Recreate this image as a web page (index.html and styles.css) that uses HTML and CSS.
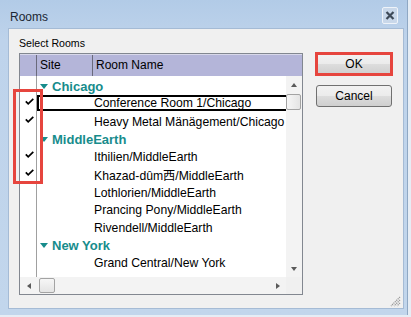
FILE: index.html
```html
<!DOCTYPE html>
<html lang="en">
<head>
    <meta charset="UTF-8">
    <title>Rooms</title>
    <link rel="stylesheet" href="styles.css">
</head>
<body>
    <div class="window">
        <div class="titlebar">
            <span class="title">Rooms</span>
            <div class="close-btn">
                <svg width="14" height="15" viewBox="0 0 14 15">
                    <path d="M3.5 4 L10.5 11 M10.5 4 L3.5 11" stroke="#3e4a58" stroke-width="2.2" fill="none"/>
                </svg>
            </div>
        </div>
        <div class="client">
            <div class="select-panel">
                <div class="group-label">Select Rooms</div>
                <div class="list">
                    <div class="list-header">
                        <div class="col-check"></div>
                        <div class="col-site">Site</div>
                        <div class="col-room">Room Name</div>
                    </div>
                    <div class="list-main">
                        <div class="rows">
                            <div class="row group">
                                <span class="check-cell"></span>
                                <span class="cell"><span class="arrow"></span>Chicago</span>
                            </div>
                            <div class="row focused">
                                <span class="check-cell"><svg class="check" width="9" height="7" viewBox="0 0 9 7"><path d="M0.8 3.3 L3.2 5.8 L8.3 0.8" fill="none" stroke="#000" stroke-width="1.7"/></svg></span>
                                <span class="cell">Conference Room 1/Chicago</span>
                            </div>
                            <div class="row">
                                <span class="check-cell"><svg class="check" width="9" height="7" viewBox="0 0 9 7"><path d="M0.8 3.3 L3.2 5.8 L8.3 0.8" fill="none" stroke="#000" stroke-width="1.7"/></svg></span>
                                <span class="cell">Heavy Metal Mänägement/Chicago</span>
                            </div>
                            <div class="row group">
                                <span class="check-cell"></span>
                                <span class="cell"><span class="arrow"></span>MiddleEarth</span>
                            </div>
                            <div class="row">
                                <span class="check-cell"><svg class="check" width="9" height="7" viewBox="0 0 9 7"><path d="M0.8 3.3 L3.2 5.8 L8.3 0.8" fill="none" stroke="#000" stroke-width="1.7"/></svg></span>
                                <span class="cell">Ithilien/MiddleEarth</span>
                            </div>
                            <div class="row">
                                <span class="check-cell"><svg class="check" width="9" height="7" viewBox="0 0 9 7"><path d="M0.8 3.3 L3.2 5.8 L8.3 0.8" fill="none" stroke="#000" stroke-width="1.7"/></svg></span>
                                <span class="cell">Khazad-dûm西/MiddleEarth</span>
                            </div>
                            <div class="row">
                                <span class="check-cell"></span>
                                <span class="cell">Lothlorien/MiddleEarth</span>
                            </div>
                            <div class="row">
                                <span class="check-cell"></span>
                                <span class="cell">Prancing Pony/MiddleEarth</span>
                            </div>
                            <div class="row">
                                <span class="check-cell"></span>
                                <span class="cell">Rivendell/MiddleEarth</span>
                            </div>
                            <div class="row group">
                                <span class="check-cell"></span>
                                <span class="cell"><span class="arrow"></span>New York</span>
                            </div>
                            <div class="row">
                                <span class="check-cell"></span>
                                <span class="cell">Grand Central/New York</span>
                            </div>
                        </div>
                        <div class="vscroll">
                            <div class="sb-btn"><span class="tri-up"></span></div>
                            <div class="thumb-v"></div>
                            <div class="sb-space"></div>
                            <div class="sb-btn"><span class="tri-down"></span></div>
                        </div>
                    </div>
                    <div class="hscroll-row">
                        <div class="hscroll">
                            <div class="sb-btn-h"><span class="tri-left"></span></div>
                            <div class="thumb-h"></div>
                            <div class="sb-space"></div>
                            <div class="sb-btn-h"><span class="tri-right"></span></div>
                        </div>
                        <div class="corner"></div>
                    </div>
                </div>
                <!-- marca roja sobre las casillas -->
                <div class="mark mark-checks"></div>
            </div>
            <div class="buttons">
                <div class="btn-wrap">
                    <button class="btn">OK</button>
                    <div class="mark mark-ok"></div>
                </div>
                <button class="btn">Cancel</button>
            </div>
            <svg class="grip" width="12" height="12" viewBox="0 0 12 12">
                <path d="M11 2 L2 11 M11 5 L5 11 M11 8 L8 11" stroke="#9a9a9a" stroke-width="1.3" stroke-dasharray="1.2 0.8"/>
            </svg>
        </div>
    </div>
</body>
</html>
```

FILE: styles.css
```css
body {
    margin: 0;
    background: #e6edf5;
    font-family: 'Liberation Sans', Arial, 'Noto Sans CJK SC', sans-serif;
}
.window {
    width: 408px;
    height: 315px;
    box-sizing: border-box;
    background: linear-gradient(#b2cbe7, #bed3eb 40px, #c2d6ec);
    border-right: 1px solid #8fa8c4;
    display: flex;
    flex-direction: column;
    padding: 0 3px 6px 8px;
}
.titlebar {
    height: 28px;
    flex: none;
    display: flex;
    align-items: flex-start;
    justify-content: space-between;
    padding: 0 6px 0 2px;
}
.title {
    font-size: 12px;
    line-height: 14px;
    margin-top: 10px;
    color: #1b2633;
}
.close-btn {
    width: 16px;
    height: 17px;
    box-sizing: border-box;
    margin-top: 7px;
    border: 1px solid #eef3f9;
    border-radius: 2px;
    background: #c9d8ea;
    display: flex;
}
.client {
    flex: 1;
    background: #f0f0f0;
    border: 1px solid #a5bbd5;
    display: flex;
    align-items: flex-start;
    padding: 8px 0 0 10px;
    position: relative;
}
.select-panel {
    width: 284px;
    position: relative;
    display: flex;
    flex-direction: column;
}
.group-label {
    font-size: 10.6px;
    line-height: 13px;
    height: 13px;
    margin-bottom: 3px;
    color: #000;
}
.list {
    height: 242px;
    box-sizing: border-box;
    border: 1px solid #828790;
    background: #fff;
    display: flex;
    flex-direction: column;
}
.list-header {
    height: 22px;
    flex: none;
    display: flex;
    background: #b4b5d9;
    border-top: 1px solid #d8d8ea;
    box-sizing: border-box;
    font-size: 12px;
    line-height: 20px;
    color: #000;
}
.col-check {
    width: 17px;
    box-sizing: border-box;
    border-right: 1px solid #6a6a7c;
}
.col-site {
    width: 56px;
    box-sizing: border-box;
    border-right: 1px solid #6a6a7c;
    padding-left: 3px;
}
.col-room {
    flex: 1;
    padding-left: 3px;
}
.list-main {
    height: 201px;
    flex: none;
    display: flex;
}
.rows {
    flex: 1;
    padding-top: 2px;
    overflow: hidden;
    background: linear-gradient(to right, #fff 16px, #a0a0a0 16px, #a0a0a0 17px, #fff 17px);
}
.row {
    height: 17.65px;
    display: flex;
    align-items: center;
    font-size: 12.2px;
    color: #000;
}
.check-cell {
    width: 17px;
    flex: none;
    align-self: stretch;
    box-sizing: border-box;
    padding: 2.5px 0 0 5px;
}
.check {
    display: block;
}
.cell {
    flex: 1;
    display: flex;
    align-items: center;
    padding-left: 57px;
    white-space: nowrap;
}
.group .cell {
    padding-left: 2.5px;
    color: #178c8c;
    font-weight: bold;
    font-size: 13px;
}
.arrow {
    width: 0;
    height: 0;
    border-left: 4.5px solid transparent;
    border-right: 4.5px solid transparent;
    border-top: 5px solid #178c8c;
    margin-right: 4.5px;
}
.focused .cell {
    align-self: flex-start;
    height: 16px;
    margin-top: -1px;
    box-sizing: border-box;
    border: 2px solid #000;
    border-right: none;
    padding-left: 55px;
}
/* barras de desplazamiento */
.vscroll {
    width: 16px;
    flex: none;
    background: #f3f3f3;
    display: flex;
    flex-direction: column;
}
.sb-btn {
    height: 17px;
    display: flex;
    align-items: center;
    justify-content: center;
}
.sb-space {
    flex: 1;
}
.thumb-v {
    height: 16px;
    width: 15px;
    margin-top: 1px;
    box-sizing: border-box;
    border: 1px solid #a3a3a3;
    border-radius: 2px;
    background: linear-gradient(to right, #f6f6f6, #e4e4e4);
}
.tri-up, .tri-down, .tri-left, .tri-right {
    width: 0;
    height: 0;
}
.tri-up {
    border-left: 3.5px solid transparent;
    border-right: 3.5px solid transparent;
    border-bottom: 4px solid #5a5a5a;
}
.tri-down {
    border-left: 3.5px solid transparent;
    border-right: 3.5px solid transparent;
    border-top: 4px solid #5a5a5a;
}
.tri-left {
    border-top: 3.5px solid transparent;
    border-bottom: 3.5px solid transparent;
    border-right: 4px solid #5a5a5a;
}
.tri-right {
    border-top: 3.5px solid transparent;
    border-bottom: 3.5px solid transparent;
    border-left: 4px solid #5a5a5a;
}
.hscroll-row {
    height: 17px;
    flex: none;
    display: flex;
}
.hscroll {
    flex: 1;
    display: flex;
    align-items: center;
    background: #f3f3f3;
}
.sb-btn-h {
    width: 17px;
    height: 17px;
    display: flex;
    align-items: center;
    justify-content: center;
}
.thumb-h {
    width: 16px;
    height: 15px;
    margin-left: 2px;
    box-sizing: border-box;
    border: 1px solid #a3a3a3;
    border-radius: 2px;
    background: linear-gradient(#f6f6f6, #e4e4e4);
}
.corner {
    width: 16px;
    background: #f0f0f0;
}
.buttons {
    display: flex;
    flex-direction: column;
    gap: 10px;
    margin: 16px 0 0 13px;
}
.btn-wrap {
    position: relative;
}
.btn {
    display: block;
    width: 76px;
    height: 22px;
    padding: 0;
    border: 1px solid #707070;
    border-radius: 3px;
    background: linear-gradient(#f2f2f2, #ebebeb 50%, #dddddd 51%, #cfcfcf);
    font-family: 'Liberation Sans', Arial, sans-serif;
    font-size: 12px;
    color: #000;
}
.mark {
    position: absolute;
    box-sizing: border-box;
    border: 3px solid #e6453e;
}
.mark-checks {
    left: -6px;
    top: 52px;
    width: 30px;
    height: 95px;
}
.mark-ok {
    left: -1px;
    top: -1px;
    right: -1px;
    bottom: -1px;
}
.grip {
    position: absolute;
    right: 2px;
    bottom: 1px;
}
```
